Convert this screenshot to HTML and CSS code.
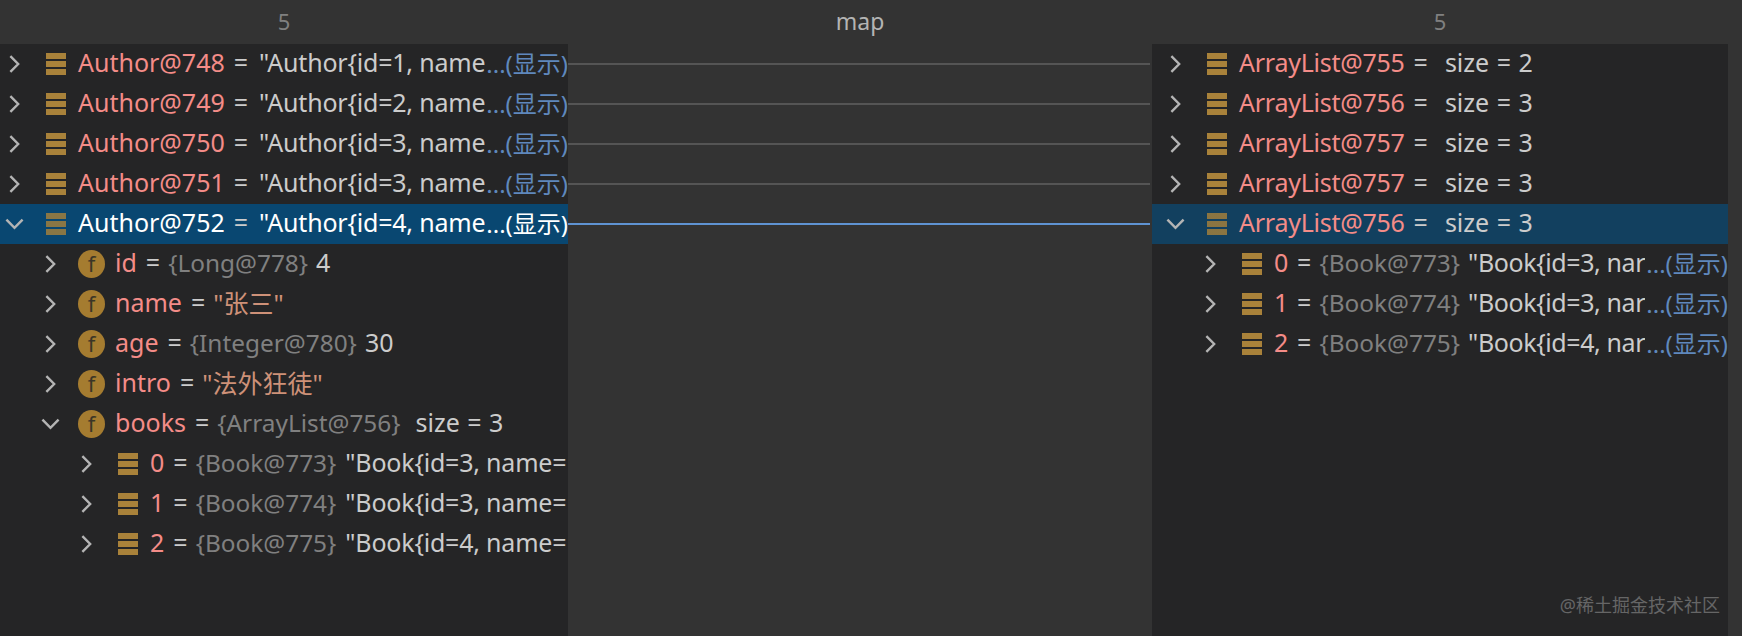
FILE: index.html
```html
<!DOCTYPE html>
<html lang="zh">
<head>
<meta charset="utf-8">
<title>map debug view</title>
<link rel="stylesheet" href="styles.css">
</head>
<body>
<svg class="defs" width="0" height="0" aria-hidden="true">
  <symbol id="right" viewBox="0 0 12 20"><path d="M1.5 1.5l8.5 8.5-8.5 8.5" fill="none" stroke="currentColor" stroke-width="2.6"/></symbol>
  <symbol id="down" viewBox="0 0 20 12"><path d="M1.5 1.5l8.5 8.5 8.5-8.5" fill="none" stroke="currentColor" stroke-width="2.6"/></symbol>
</svg>
<main class="view">
  <section class="panel">
    <header class="head">5</header>
    <div class="row"><svg class="chev"><use href="#right"/></svg><i class="bars"></i><span class="k">Author@748</span><span class="eq">=</span><span class="clip">"Author{id=1, name</span><span class="more">...(显示)</span></div>
    <div class="row"><svg class="chev"><use href="#right"/></svg><i class="bars"></i><span class="k">Author@749</span><span class="eq">=</span><span class="clip">"Author{id=2, name</span><span class="more">...(显示)</span></div>
    <div class="row"><svg class="chev"><use href="#right"/></svg><i class="bars"></i><span class="k">Author@750</span><span class="eq">=</span><span class="clip">"Author{id=3, name</span><span class="more">...(显示)</span></div>
    <div class="row"><svg class="chev"><use href="#right"/></svg><i class="bars"></i><span class="k">Author@751</span><span class="eq">=</span><span class="clip">"Author{id=3, name</span><span class="more">...(显示)</span></div>
    <div class="row sel"><svg class="chev open"><use href="#down"/></svg><i class="bars"></i><span class="k">Author@752</span><span class="eq">=</span><span class="clip">"Author{id=4, name</span><span class="more">...(显示)</span></div>
    <div class="row l1"><svg class="chev"><use href="#right"/></svg><i class="f">f</i><span class="k">id</span><span class="eq">=</span><span class="t">{Long@778}</span><span class="v">4</span></div>
    <div class="row l1"><svg class="chev"><use href="#right"/></svg><i class="f">f</i><span class="k">name</span><span class="eq">=</span><span class="s">"张三"</span></div>
    <div class="row l1"><svg class="chev"><use href="#right"/></svg><i class="f">f</i><span class="k">age</span><span class="eq">=</span><span class="t">{Integer@780}</span><span class="v">30</span></div>
    <div class="row l1"><svg class="chev"><use href="#right"/></svg><i class="f">f</i><span class="k">intro</span><span class="eq">=</span><span class="s">"法外狂徒"</span></div>
    <div class="row l1"><svg class="chev open"><use href="#down"/></svg><i class="f">f</i><span class="k">books</span><span class="eq">=</span><span class="t">{ArrayList@756}</span><span class="v wide">size = 3</span></div>
    <div class="row l2"><svg class="chev"><use href="#right"/></svg><i class="bars"></i><span class="k">0</span><span class="eq">=</span><span class="t">{Book@773}</span><span class="clip">"Book{id=3, name=</span></div>
    <div class="row l2"><svg class="chev"><use href="#right"/></svg><i class="bars"></i><span class="k">1</span><span class="eq">=</span><span class="t">{Book@774}</span><span class="clip">"Book{id=3, name=</span></div>
    <div class="row l2"><svg class="chev"><use href="#right"/></svg><i class="bars"></i><span class="k">2</span><span class="eq">=</span><span class="t">{Book@775}</span><span class="clip">"Book{id=4, name=</span></div>
  </section>
  <section class="middle">
    <header class="head title">map</header>
    <div class="link"></div>
    <div class="link"></div>
    <div class="link"></div>
    <div class="link"></div>
    <div class="link on"></div>
  </section>
  <section class="panel right">
    <header class="head">5</header>
    <div class="row"><svg class="chev"><use href="#right"/></svg><i class="bars"></i><span class="k">ArrayList@755</span><span class="eq">=</span><span class="v wide">size = 2</span></div>
    <div class="row"><svg class="chev"><use href="#right"/></svg><i class="bars"></i><span class="k">ArrayList@756</span><span class="eq">=</span><span class="v wide">size = 3</span></div>
    <div class="row"><svg class="chev"><use href="#right"/></svg><i class="bars"></i><span class="k">ArrayList@757</span><span class="eq">=</span><span class="v wide">size = 3</span></div>
    <div class="row"><svg class="chev"><use href="#right"/></svg><i class="bars"></i><span class="k">ArrayList@757</span><span class="eq">=</span><span class="v wide">size = 3</span></div>
    <div class="row sel"><svg class="chev open"><use href="#down"/></svg><i class="bars"></i><span class="k">ArrayList@756</span><span class="eq">=</span><span class="v wide">size = 3</span></div>
    <div class="row l1b"><svg class="chev"><use href="#right"/></svg><i class="bars"></i><span class="k">0</span><span class="eq">=</span><span class="t">{Book@773}</span><span class="clip">"Book{id=3, nar</span><span class="more">...(显示)</span></div>
    <div class="row l1b"><svg class="chev"><use href="#right"/></svg><i class="bars"></i><span class="k">1</span><span class="eq">=</span><span class="t">{Book@774}</span><span class="clip">"Book{id=3, nar</span><span class="more">...(显示)</span></div>
    <div class="row l1b"><svg class="chev"><use href="#right"/></svg><i class="bars"></i><span class="k">2</span><span class="eq">=</span><span class="t">{Book@775}</span><span class="clip">"Book{id=4, nar</span><span class="more">...(显示)</span></div>
  </section>
  <div class="strip"></div>
  <div class="mark">@稀土掘金技术社区</div>
</main>
</body>
</html>
```
FILE: styles.css
```css
* { box-sizing: border-box; }
html, body { margin: 0; height: 100%; background: #333; }
.defs { position: absolute; }
.view {
  position: relative;
  display: grid;
  grid-template-columns: 568px 584px 576px 14px;
  height: 636px;
  overflow: hidden;
  font-family: "Noto Sans", "Noto Sans CJK SC", sans-serif;
  font-size: 25px;
  color: #ccc;
}
.panel { background: #252526; overflow: hidden; }
.middle, .strip { background: #333; }
.head {
  height: 44px;
  padding-bottom: 2px;
  display: flex;
  align-items: center;
  justify-content: center;
  background: #333;
  color: #808080;
  font-size: 22px;
}
.title { color: #b4b4b4; font-size: 23px; }
.row {
  display: flex;
  align-items: center;
  height: 40px;
  padding-left: 9px;
  white-space: nowrap;
}
.row span { margin-bottom: 4px; }
.right .row { padding-left: 18px; }
.row.l1 { padding-left: 45px; }
.row.l2 { padding-left: 81px; }
.right .row.l1b { padding-left: 53px; }
.sel { background: #094771; }
.right .sel { background: #12405f; }
.chev { width: 11px; height: 20px; color: #b4b4b4; flex: none; }
.chev.open { width: 19px; height: 12px; margin-left: -4px; margin-right: -4px; }
.bars {
  flex: none;
  width: 20px;
  height: 22px;
  margin: 0 12px 0 26px;
  background: repeating-linear-gradient(to bottom, #a9823a 0 6px, transparent 6px 8px);
}
.sel .bars { opacity: .8; }
.f {
  flex: none;
  width: 27px;
  height: 28px;
  margin: 0 10px 0 22px;
  border-radius: 50%;
  background: #a57c30;
  color: #3c3626;
  font: 22px/27px "Noto Sans", sans-serif;
  text-align: center;
}
.k { color: #f48c88; }
.right .k { letter-spacing: -.25px; }
.eq { margin-left: 9px; margin-right: 11px; }
.right .eq { margin-right: 10px; }
.l1 .eq, .l2 .eq, .right .l1b .eq { margin-left: 9px; margin-right: 8px; }
.v { color: #ccc; }
.t { color: #808080; margin-right: 8px; font-size: 24.4px; }
.l2 .t { margin-right: 9px; }
.s { color: #ce9178; }
.v.wide { margin-left: 7px; word-spacing: 1px; }
.clip { flex: 0 1 auto; min-width: 0; overflow: hidden; color: #ccc; letter-spacing: -.2px; }
.l1b .clip { letter-spacing: -.4px; }
.more { color: #5f88bd; flex: none; margin-left: auto; font-size: 24px; }
.sel .k, .sel .clip, .sel .more { color: #fff; }
.right .sel .k { color: #f48c88; }
.link { height: 40px; display: flex; align-items: center; padding-right: 2px; }
.link::before { content: ""; display: block; width: 100%; height: 2px; background: #555; }
.link.on::before { background: #5f93d2; }
.mark {
  position: absolute;
  right: 22px;
  bottom: 19px;
  color: #666;
  font-size: 18px;
}
```
